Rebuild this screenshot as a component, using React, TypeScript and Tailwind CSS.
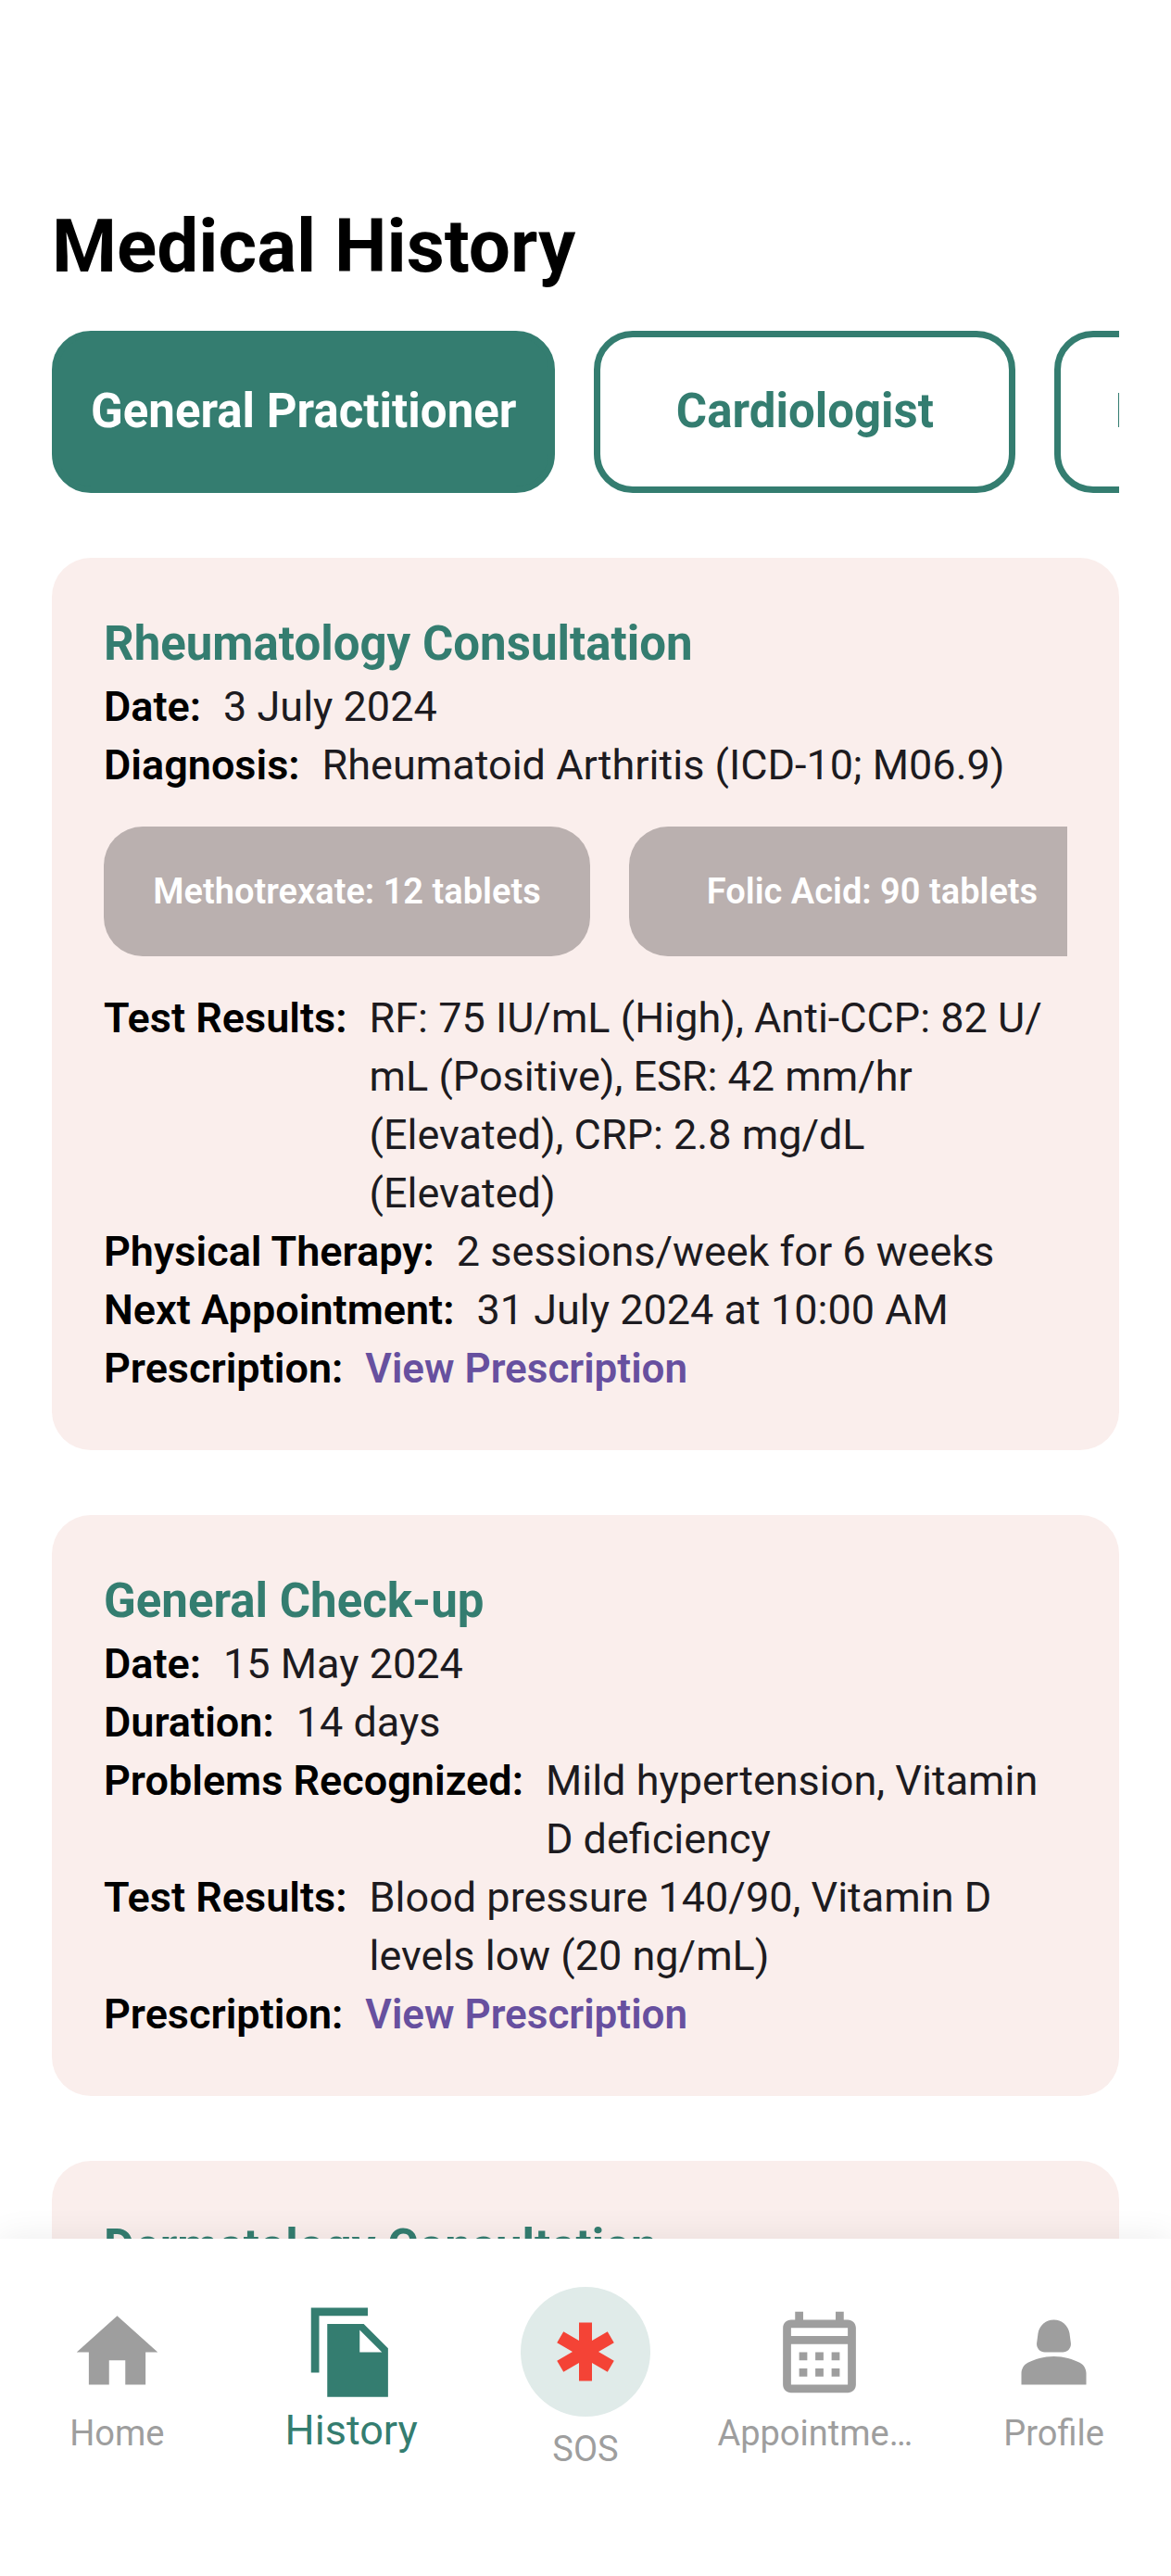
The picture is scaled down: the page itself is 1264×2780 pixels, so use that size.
import type { ReactNode } from "react";

function Row({ label, children }: { label: string; children: ReactNode }) {
  return (
    <div className="flex gap-6">
      <dt className="shrink-0 font-semibold text-black">{label}</dt>
      <dd className="min-w-0 pr-2 text-[#1d1b20]">{children}</dd>
    </div>
  );
}

function PrescriptionLink() {
  return (
    <a href="#prescription" className="text-[44px] font-semibold text-[#67509f]">
      View Prescription
    </a>
  );
}

function Card({ title, children }: { title: string; children: ReactNode }) {
  return (
    <article className="rounded-[42px] bg-[#faeeec] p-14 text-[45px] leading-[63px]">
      <h2 className="text-[51px] leading-[73px] font-bold text-[#347d70]">{title}</h2>
      {children}
    </article>
  );
}

function Tab({ label, active = false }: { label: string; active?: boolean }) {
  return (
    <button
      type="button"
      role="tab"
      aria-selected={active}
      className={
        active
          ? "h-[175px] min-w-[455px] shrink-0 rounded-[42px] border-[7px] border-[#347d70] bg-[#347d70] px-[35px] text-[51px] font-bold text-white"
          : "h-[175px] min-w-[455px] shrink-0 rounded-[42px] border-[7px] border-[#347d70] bg-white px-[35px] text-[51px] font-bold text-[#347d70]"
      }
    >
      {label}
    </button>
  );
}

function Medicine({ label }: { label: string }) {
  return (
    <li className="flex h-[140px] min-w-[525px] shrink-0 items-center justify-center rounded-[42px] bg-[#bab0af] px-7 text-[38px] font-semibold text-white">
      {label}
    </li>
  );
}

function Icon({ d, className }: { d: string; className: string }) {
  return (
    <svg viewBox="0 0 24 24" fill="currentColor" aria-hidden="true" className={className}>
      <path d={d} />
    </svg>
  );
}

const paths = {
  home: "M10 20v-6h4v6h5v-8h3L12 3 2 12h3v8z",
  history: "M16 1H2v16h2V3h12V1zm-1 4l6 6v12H6V5h9zm-1 7h5.5L14 6.5V12z",
  sos: "M20.79 9.23l-2-3.46L14 8.54V3h-4v5.54L5.21 5.77l-2 3.46L8 12l-4.79 2.77 2 3.46L10 15.46V21h4v-5.54l4.79 2.77 2-3.46L16 12z",
  calendar:
    "M19 4h-1V2h-2v2H8V2H6v2H5c-1.11 0-1.99.9-1.99 2L3 20c0 1.1.89 2 2 2h14c1.1 0 2-.9 2-2V6c0-1.1-.9-2-2-2zM19 20H5V10h14v10zM19 8H5V6h14v2zM9 14H7v-2h2v2zm4 0h-2v-2h2v2zm4 0h-2v-2h2v2zm-8 4H7v-2h2v2zm4 0h-2v-2h2v2zm4 0h-2v-2h2v2z",
  profile:
    "M18.39 14.56C16.71 13.7 14.53 13 12 13s-4.71.7-6.39 1.56C4.61 15.07 4 16.1 4 17.22V20h16v-2.78c0-1.12-.61-2.15-1.61-2.66zM9.78 12h4.44c1.21 0 2.14-1.06 1.98-2.26l-.32-2.45C15.57 5.39 13.92 4 12 4S8.43 5.39 8.12 7.29L7.8 9.74c-.16 1.2.77 2.26 1.98 2.26z",
};

function NavItem({ label, d }: { label: string; d: string }) {
  return (
    <a href={"#" + label.toLowerCase()} className="flex min-w-0 flex-col items-center px-4 pt-[70px] text-[#9e9e9e]">
      <Icon d={d} className="size-[105px]" />
      <span className="mt-2 max-w-full truncate text-[38px] leading-[54px]">{label}</span>
    </a>
  );
}

export default function App() {
  return (
    <div className="flex h-screen flex-col bg-white font-[Roboto,'Liberation_Sans',sans-serif]">
      <main className="flex min-h-0 flex-1 flex-col overflow-hidden px-14 pt-[210px]">
        <h1 className="text-[80px] leading-[112px] font-bold text-black">Medical History</h1>
        <div role="tablist" aria-label="Specialty" className="mt-[35px] flex shrink-0 gap-[42px] overflow-hidden">
          <Tab label="General Practitioner" active />
          <Tab label="Cardiologist" />
          <Tab label="Dermatologist" />
        </div>
        <div className="mt-[70px] flex flex-col gap-[70px]">
          <Card title="Rheumatology Consultation">
            <dl>
              <Row label="Date:">3 July 2024</Row>
              <Row label="Diagnosis:">Rheumatoid Arthritis (ICD-10; M06.9)</Row>
            </dl>
            <ul className="my-[35px] flex gap-[42px] overflow-hidden">
              <Medicine label="Methotrexate: 12 tablets" />
              <Medicine label="Folic Acid: 90 tablets" />
            </ul>
            <dl>
              <Row label="Test Results:">
                RF: 75 IU/mL (High), Anti-CCP: 82 U/
                <wbr />
                mL (Positive), ESR: 42 mm/hr (Elevated), CRP: 2.8 mg/dL (Elevated)
              </Row>
              <Row label="Physical Therapy:">2 sessions/week for 6 weeks</Row>
              <Row label="Next Appointment:">31 July 2024 at 10:00 AM</Row>
              <Row label="Prescription:">
                <PrescriptionLink />
              </Row>
            </dl>
          </Card>
          <Card title="General Check-up">
            <dl>
              <Row label="Date:">15 May 2024</Row>
              <Row label="Duration:">14 days</Row>
              <Row label="Problems Recognized:">Mild hypertension, Vitamin D&nbsp;deficiency</Row>
              <Row label="Test Results:">Blood pressure 140/90, Vitamin D levels low (20 ng/mL)</Row>
              <Row label="Prescription:">
                <PrescriptionLink />
              </Row>
            </dl>
          </Card>
          <Card title="Dermatology Consultation">
            <dl>
              <Row label="Prescription:">
                <PrescriptionLink />
              </Row>
            </dl>
          </Card>
        </div>
      </main>
      <nav
        aria-label="Main"
        className="relative grid h-[364px] shrink-0 grid-cols-5 bg-white shadow-[0_0_35px_rgba(0,0,0,0.08)]"
      >
        <NavItem label="Home" d={paths.home} />
        <a href="#history" aria-current="page" className="flex flex-col items-center pt-[70px] text-[#347d70]">
          <Icon d={paths.history} className="size-[105px]" />
          <span className="text-[45px] leading-[63px]">History</span>
        </a>
        <a href="#sos" className="flex flex-col items-center pt-[52px] text-[#9e9e9e]">
          <span className="flex size-[140px] items-center justify-center rounded-full bg-[#e0ebe9] text-[#f44336]">
            <Icon d={paths.sos} className="size-[84px]" />
          </span>
          <span className="mt-2 text-[38px] leading-[54px]">SOS</span>
        </a>
        <NavItem label="Appointments" d={paths.calendar} />
        <NavItem label="Profile" d={paths.profile} />
      </nav>
    </div>
  );
}
